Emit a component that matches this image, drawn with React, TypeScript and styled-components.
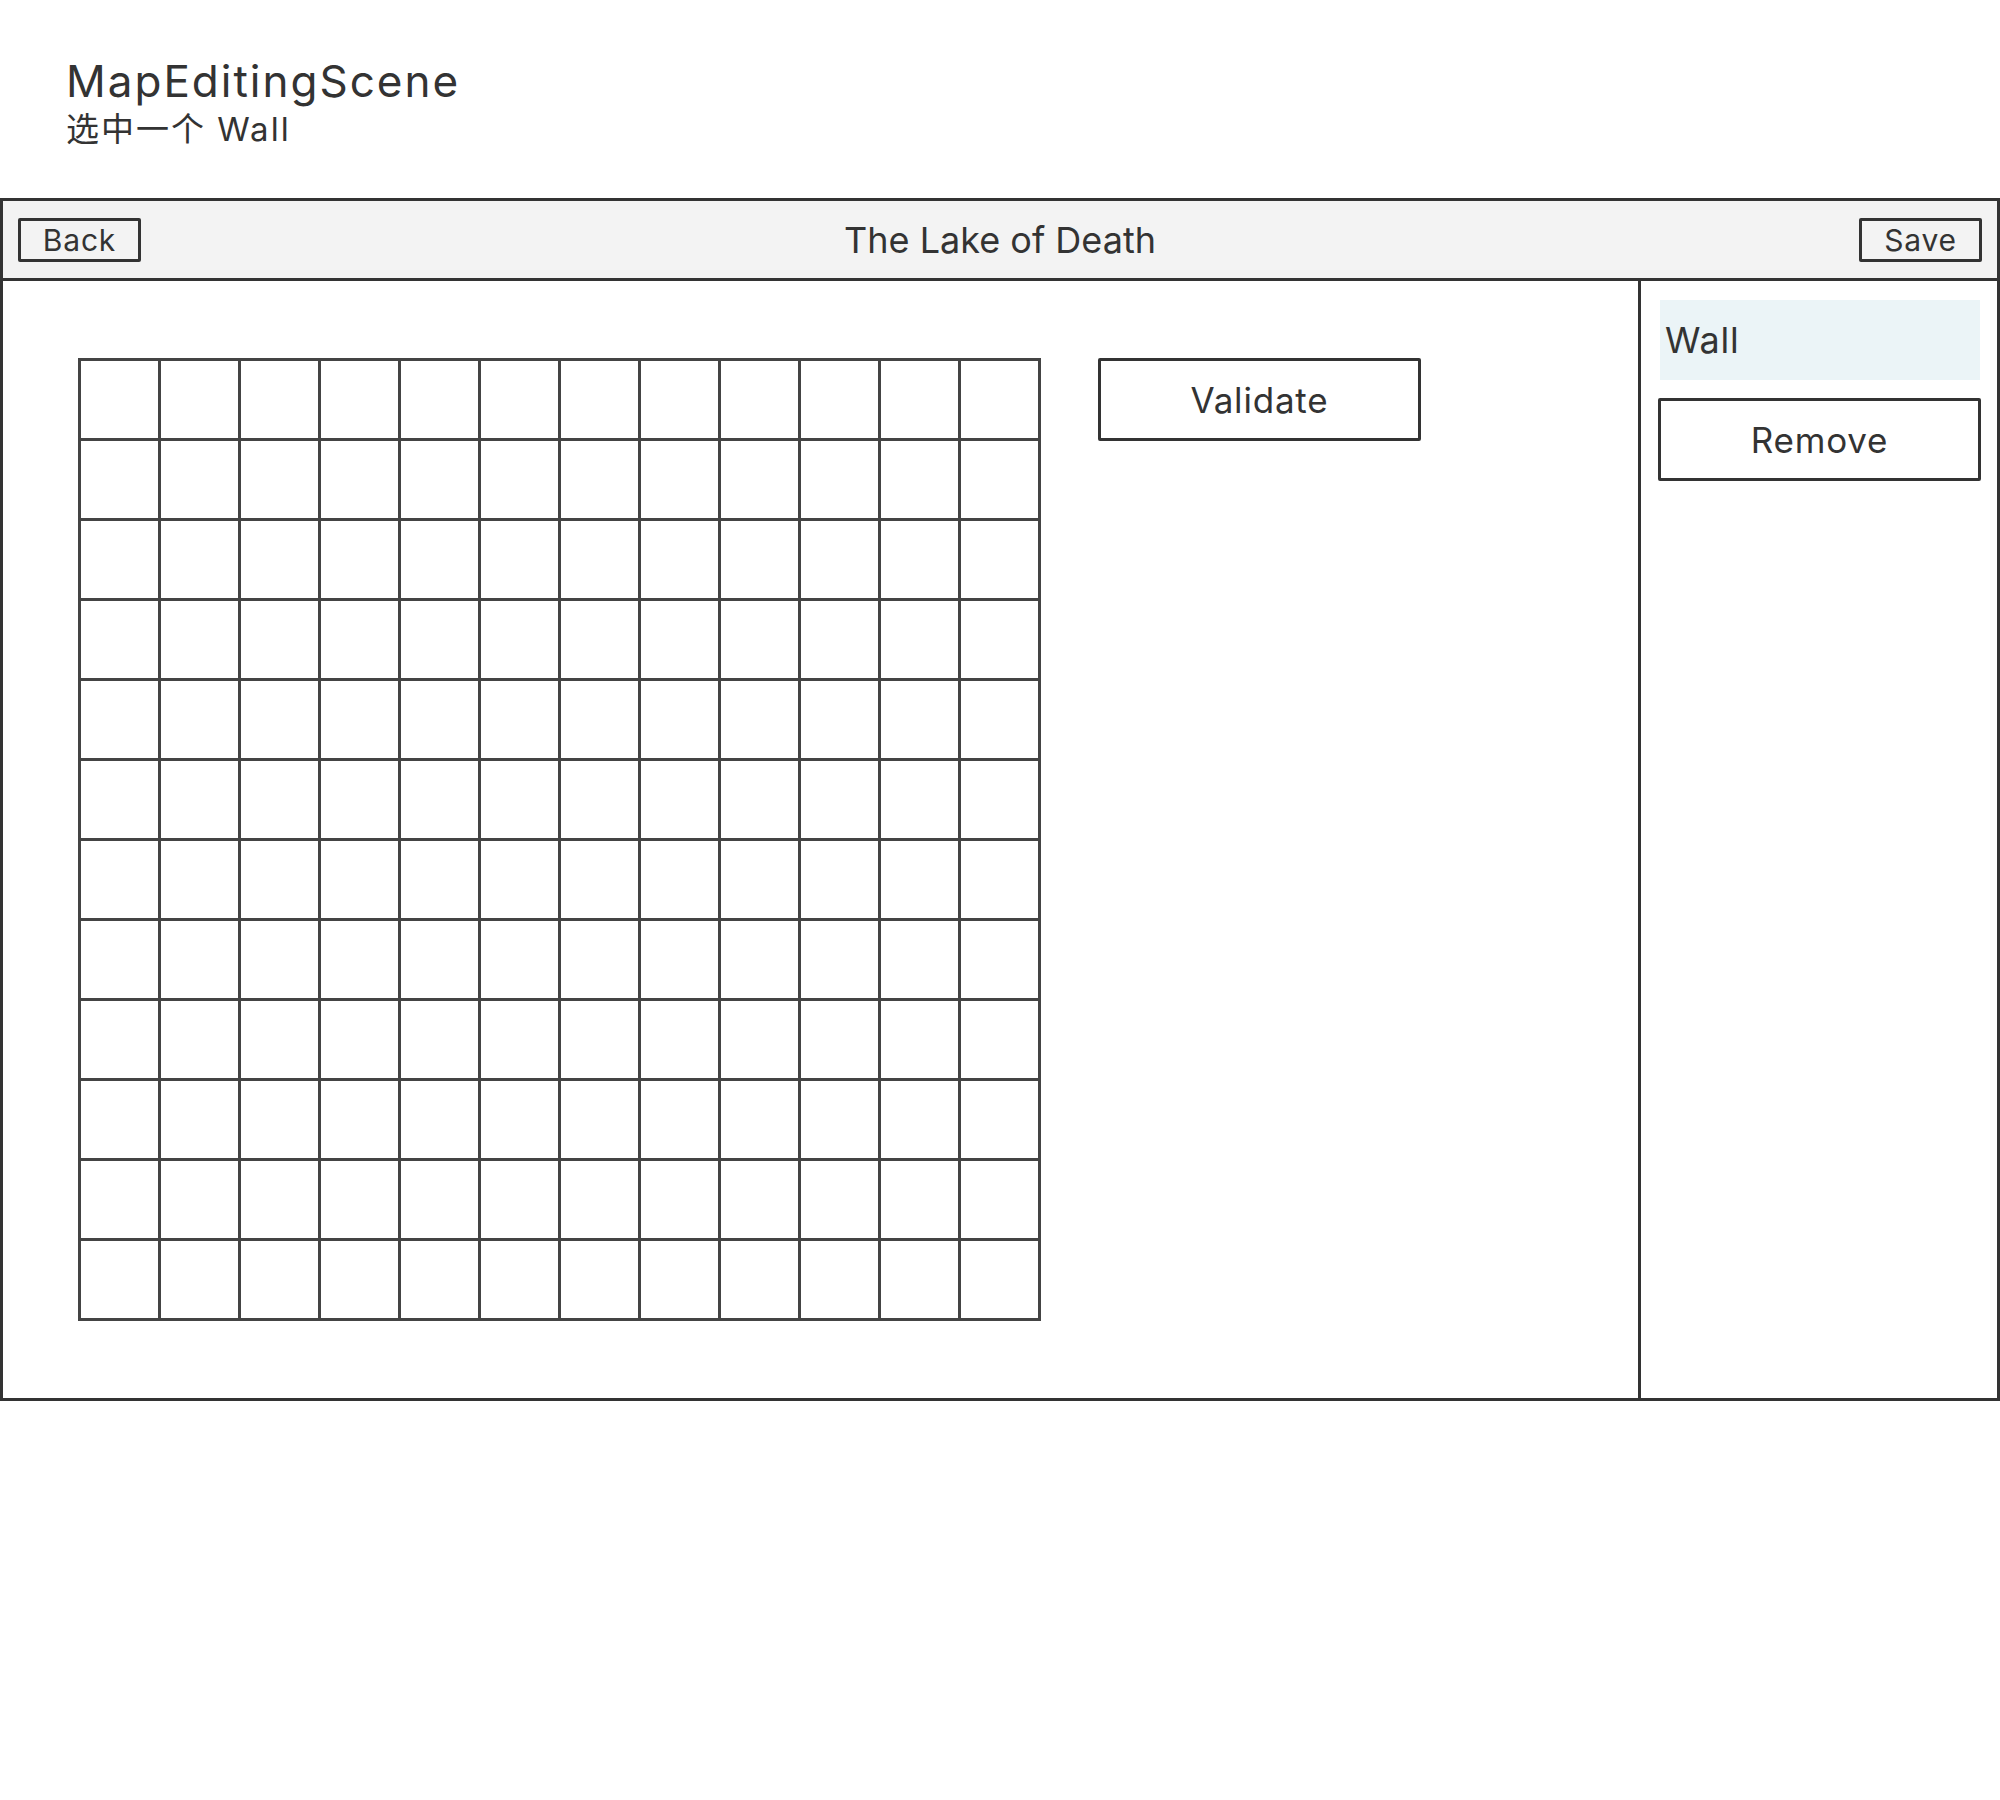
import React from "react";
import styled, { createGlobalStyle } from "styled-components";

const GlobalStyle = createGlobalStyle`
  html, body {
    margin: 0;
    padding: 0;
    background: #ffffff;
  }
  body {
    font-family: Inter, "Noto Sans CJK SC", "Noto Sans", sans-serif;
    color: #333333;
  }
  * { box-sizing: border-box; }
`;

const Page = styled.div`
  width: 2000px;
  display: flex;
  flex-direction: column;
`;

const Heading = styled.header`
  height: 198px;
  padding: 59px 0 0 66px;
  display: flex;
  flex-direction: column;
`;

const SceneName = styled.h1`
  margin: 0;
  font-size: 44px;
  line-height: 44px;
  font-weight: 400;
  letter-spacing: 2px;
  color: #333;
`;

const SceneNote = styled.div`
  margin-top: 6px;
  font-size: 33px;
  line-height: 40px;
  letter-spacing: 2px;
  color: #333;
`;

const Frame = styled.section`
  width: 2000px;
  border: 3px solid #333;
  display: flex;
  flex-direction: column;
`;

const TopBar = styled.div`
  height: 80px;
  background: #f3f3f3;
  border-bottom: 3px solid #333;
  display: grid;
  grid-template-columns: 1fr auto 1fr;
  align-items: center;
  padding: 0 15px;
`;

const BarTitle = styled.div`
  font-size: 36px;
  letter-spacing: 0px;
  color: #333;
  text-align: center;
`;

const SmallButton = styled.button<{ $end?: boolean }>`
  justify-self: ${(p) => (p.$end ? "end" : "start")};
  width: 123px;
  height: 44px;
  border: 3px solid #333;
  border-radius: 2px;
  background: #f3f3f3;
  font-family: inherit;
  font-size: 30px;
  letter-spacing: 0.8px;
  color: #333;
  padding: 0;
  display: flex;
  align-items: center;
  justify-content: center;
`;

const Body = styled.div`
  height: 1117px;
  display: flex;
`;

const Canvas = styled.div`
  flex: 1;
  padding: 77px 0 0 75px;
  display: flex;
  align-items: flex-start;
  gap: 57px;
`;

const TileGrid = styled.div`
  display: grid;
  grid-template-columns: repeat(12, 80px);
  grid-auto-rows: 80px;
  border-top: 3px solid #444;
  border-left: 3px solid #444;
`;

const Tile = styled.div`
  border-right: 3px solid #444;
  border-bottom: 3px solid #444;
  background: #fff;
`;

const BigButton = styled.button`
  width: 323px;
  height: 83px;
  border: 3px solid #333;
  border-radius: 2px;
  background: #fff;
  font-family: inherit;
  font-size: 35px;
  letter-spacing: 0.8px;
  color: #333;
  padding: 0;
  display: flex;
  align-items: center;
  justify-content: center;
`;

const Sidebar = styled.aside`
  width: 359px;
  border-left: 3px solid #333;
  padding: 19px 0 0 17px;
  display: flex;
  flex-direction: column;
  align-items: flex-start;
  gap: 18px;
`;

const SelectedItem = styled.div`
  width: 320px;
  height: 80px;
  margin-left: 2px;
  background: #ebf4f7;
  padding-left: 5px;
  display: flex;
  align-items: center;
  font-size: 36px;
  letter-spacing: 0.8px;
  color: #333;
`;

const tiles = Array.from({ length: 144 }, (_, i) => i);

export default function App() {
  return (
    <Page>
      <GlobalStyle />
      <Heading>
        <SceneName>MapEditingScene</SceneName>
        <SceneNote>选中一个 Wall</SceneNote>
      </Heading>
      <Frame>
        <TopBar>
          <SmallButton>Back</SmallButton>
          <BarTitle>The Lake of Death</BarTitle>
          <SmallButton $end>Save</SmallButton>
        </TopBar>
        <Body>
          <Canvas>
            <TileGrid>
              {tiles.map((t) => (
                <Tile key={t} />
              ))}
            </TileGrid>
            <BigButton>Validate</BigButton>
          </Canvas>
          <Sidebar>
            <SelectedItem>Wall</SelectedItem>
            <BigButton>Remove</BigButton>
          </Sidebar>
        </Body>
      </Frame>
    </Page>
  );
}
